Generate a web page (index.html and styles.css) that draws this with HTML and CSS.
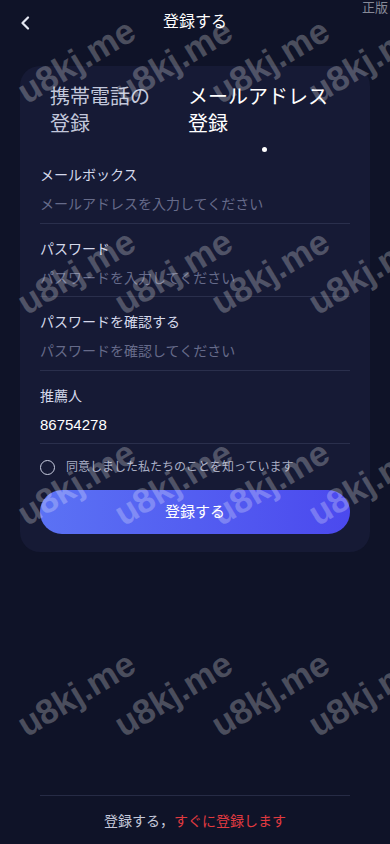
FILE: index.html
```html
<!DOCTYPE html>
<html lang="ja">
<head>
<meta charset="utf-8">
<meta name="viewport" content="width=device-width, initial-scale=1">
<title>登録する</title>
<link rel="stylesheet" href="styles.css">
</head>
<body>
<div class="page">
  <header class="topbar">
    <button class="back" aria-label="back">
      <svg width="10" height="14" viewBox="0 0 10 14"><polyline points="8,1.5 2.5,7 8,12.5" fill="none" stroke="#e4e7f2" stroke-width="2.2" stroke-linecap="round" stroke-linejoin="round"/></svg>
    </button>
    <h1 class="title">登録する</h1>
    <span class="badge">正版</span>
  </header>

  <main class="main">
    <section class="card">
      <div class="tabs">
        <div class="tab">携帯電話の<br>登録</div>
        <div class="tab active">メールアドレス<br>登録</div>
      </div>

      <div class="field">
        <div class="label">メールボックス</div>
        <div class="input placeholder">メールアドレスを入力してください</div>
      </div>
      <div class="field">
        <div class="label">パスワード</div>
        <div class="input placeholder">パスワードを入力してください</div>
      </div>
      <div class="field">
        <div class="label">パスワードを確認する</div>
        <div class="input placeholder">パスワードを確認してください</div>
      </div>
      <div class="field">
        <div class="label">推薦人</div>
        <div class="input value">86754278</div>
      </div>

      <label class="agree">
        <span class="radio"></span>
        <span class="agree-text">同意しました私たちのことを知っています</span>
      </label>

      <button class="submit">登録する</button>
    </section>
  </main>

  <footer class="footer">
    <span class="foot-grey">登録する，</span><span class="foot-red">すぐに登録します</span>
  </footer>

  <div class="watermarks" aria-hidden="true">
    <div class="wm-grid">
      <div class="wm"><span>u8kj.me</span></div><div class="wm"><span>u8kj.me</span></div><div class="wm"><span>u8kj.me</span></div><div class="wm"><span>u8kj.me</span></div>
      <div class="wm"><span>u8kj.me</span></div><div class="wm"><span>u8kj.me</span></div><div class="wm"><span>u8kj.me</span></div><div class="wm"><span>u8kj.me</span></div>
      <div class="wm"><span>u8kj.me</span></div><div class="wm"><span>u8kj.me</span></div><div class="wm"><span>u8kj.me</span></div><div class="wm"><span>u8kj.me</span></div>
      <div class="wm"><span>u8kj.me</span></div><div class="wm"><span>u8kj.me</span></div><div class="wm"><span>u8kj.me</span></div><div class="wm"><span>u8kj.me</span></div>
    </div>
  </div>
</div>
</body>
</html>
```

FILE: styles.css
```css
* { box-sizing: border-box; }

html, body {
  margin: 0;
  padding: 0;
  background: #0f1328;
  overflow: hidden;
}

body {
  font-family: "Liberation Sans", "Noto Sans CJK JP", sans-serif;
  color: #d4d8ea;
}

.page {
  position: relative;
  width: 390px;
  height: 844px;
  display: flex;
  flex-direction: column;
  overflow: hidden;
}

.topbar {
  position: relative;
  height: 44px;
  display: flex;
  align-items: center;
  justify-content: center;
  flex-shrink: 0;
}

.back {
  position: absolute;
  left: 19px;
  top: 15px;
  width: 12px;
  height: 16px;
  padding: 0;
  border: 0;
  background: none;
  display: flex;
  align-items: center;
  justify-content: center;
}

.title {
  margin: 0;
  font-size: 16px;
  font-weight: 400;
  color: #ffffff;
  line-height: 20px;
}

.badge {
  position: absolute;
  top: 0;
  right: 2px;
  font-size: 13px;
  line-height: 15px;
  color: #868a98;
}

.main {
  flex: 1;
  padding: 22px 20px 0;
}

.card {
  background: #161a35;
  border-radius: 20px;
  padding: 18px 20px 18px;
}

.tabs {
  display: flex;
  padding-bottom: 12px;
}

.tab {
  font-size: 20px;
  line-height: 27px;
  color: #c2c7db;
  width: 148px;
  padding-left: 10px;
}

.tab.active {
  position: relative;
  width: 152px;
  padding-left: 0;
  color: #ffffff;
}

.tab.active::after {
  content: "";
  position: absolute;
  left: 74px;
  bottom: -14px;
  width: 5px;
  height: 5px;
  border-radius: 50%;
  background: #ffffff;
}

.field {
  padding: 15px 0 8.5px;
  border-bottom: 1px solid #2a2f4c;
  display: flex;
  flex-direction: column;
  gap: 9px;
}

.label {
  font-size: 14px;
  line-height: 20px;
  color: #d4d8ea;
}

.input {
  font-size: 14px;
  line-height: 20px;
}

.placeholder {
  color: #666b8a;
}

.value {
  font-size: 15px;
  color: #ffffff;
}

.agree {
  display: flex;
  align-items: center;
  gap: 11px;
  margin-top: 13px;
  height: 20px;
}

.radio {
  width: 15px;
  height: 15px;
  border-radius: 50%;
  border: 1.5px solid #c9cde0;
  flex-shrink: 0;
}

.agree-text {
  font-size: 12px;
  line-height: 16px;
  color: #a8adc4;
}

.submit {
  display: block;
  width: 100%;
  height: 44px;
  margin-top: 13px;
  border: 0;
  border-radius: 22px;
  background: linear-gradient(90deg, #5b72f4 0%, #4b49ee 100%);
  color: #ffffff;
  font-family: "Liberation Sans", "Noto Sans CJK JP", sans-serif;
  font-size: 15px;
  line-height: 20px;
}

.footer {
  margin: 0 40px;
  border-top: 1px solid #262b45;
  padding: 15px 0 13px;
  text-align: center;
  font-size: 14px;
  line-height: 20px;
  flex-shrink: 0;
}

.foot-grey { color: #c4c8da; }
.foot-red { color: #e13a40; }

.watermarks {
  position: absolute;
  inset: 0;
  overflow: hidden;
  pointer-events: none;
}

.wm-grid {
  display: grid;
  grid-template-columns: repeat(4, 97px);
  grid-template-rows: repeat(4, 211px);
  margin: -45px 0 0 28px;
}

.wm {
  display: flex;
  align-items: center;
  justify-content: center;
}

.wm span {
  flex-shrink: 0;
  white-space: nowrap;
  font-family: "Liberation Sans", sans-serif;
  font-weight: 700;
  font-size: 35px;
  line-height: 36px;
  color: rgba(255, 255, 255, 0.25);
  transform: rotate(-31deg);
}
```
